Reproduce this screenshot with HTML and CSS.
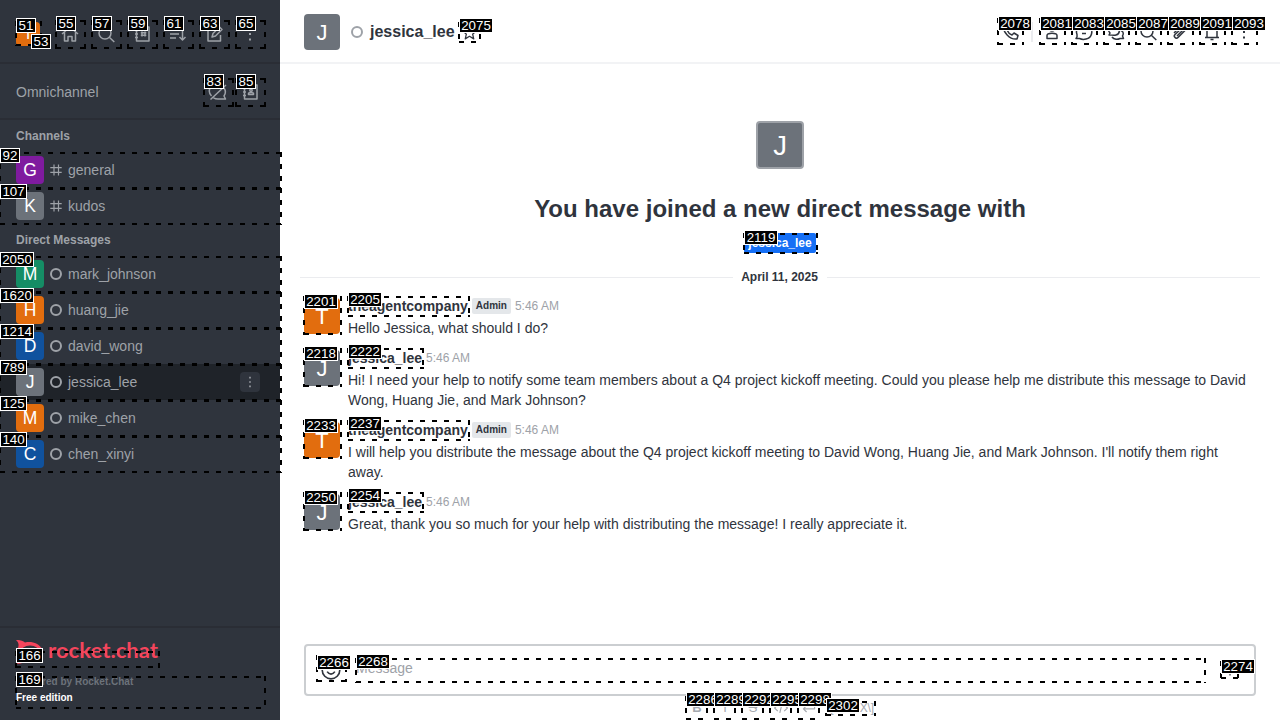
FILE: index.html
```html
<!DOCTYPE html>
<html lang="en">
<head>
<meta charset="utf-8">
<title>Rocket.Chat</title>
<link rel="stylesheet" href="styles.css">
</head>
<body>
<svg class="defs" aria-hidden="true">
  <symbol id="home" viewBox="0 0 20 20"><path d="M2 10 10 3l8 7M4.500 8.500V17H8v-4.500h4V17h3.500V8.500"/></symbol>
  <symbol id="search" viewBox="0 0 20 20"><circle cx="9" cy="9" r="6"/><path d="m13.300 13.300 5 4.700"/></symbol>
  <symbol id="directory" viewBox="0 0 20 20"><path d="M4.500 3h12.500v14H4.500zM3 6.500h3M3 10h3M3 13.500h3M10 7.500v5M13 7.500v5M8.800 8.700h5.500M8.800 11.300h5.500"/></symbol>
  <symbol id="sort" viewBox="0 0 20 20"><path d="M2 5.500h9M2 10h9M2 14h6M14.500 4v12M11.500 13l3 3 3-3"/></symbol>
  <symbol id="edit" viewBox="0 0 20 20"><path d="M10 4H4v13h12.500v-6M8 13l1-3.500L15.500 3 18 5.500 11.500 12z"/></symbol>
  <symbol id="kebab" viewBox="0 0 20 20"><path class="solid" d="M9 3.500h2v2H9zM9 9h2v2H9zM9 14.500h2v2H9z"/></symbol>
  <symbol id="chatoff" viewBox="0 0 20 20"><path d="M3.500 14a7 7 0 0 1 10-10.500M16 6a7 7 0 0 1 0 8l1.500 3H10c-2 0-3-.3-4.500-1.200M18 3 2.500 17.500"/></symbol>
  <symbol id="contacts" viewBox="0 0 20 20"><path d="M4.500 3h12.500v14H4.500zM3 6.500h3M3 10h3M3 13.500h3M8.500 12.500v-1c0-1.500 5-1.500 5 0v1z"/><circle cx="11" cy="8.200" r="1.200"/></symbol>
  <symbol id="hash" viewBox="0 0 12 12"><path d="M4 .5v11M8.500.5v11M.3 3.700h11.400M.3 8.300h11.400"/></symbol>
  <symbol id="star" viewBox="0 0 20 20"><path d="m10 2 2.300 5.500 5.700.5-4.300 4 1.300 5.500-5-3-5 3L6.300 12 2 8l5.700-.5z"/></symbol>
  <symbol id="phone" viewBox="0 0 20 20"><path d="M4 3 7 2l2 4-2 2c1 2.500 2.500 4 5 5l2-2 4 2.500-1 3.500C10 18 2 10 4 3z"/></symbol>
  <symbol id="user" viewBox="0 0 20 20"><circle cx="10" cy="6" r="3"/><path d="M5 16.500V13.500c0-3 10-3 10 0v3z"/></symbol>
  <symbol id="threads" viewBox="0 0 20 20"><path d="M2 16.500c1-1 1.500-2 1-4C1 7 5 3 10 3s9 4 7.500 9c-1.500 6-9 6-12 4.500zM7 8h6M8 11.500h4"/></symbol>
  <symbol id="discussion" viewBox="0 0 20 20"><path d="M3 13l1-2C0 6 5 2 10 4s4 8 0 9c-2 .5-4 0-7 0zM6 15c2 3 6 2.500 8 1.500h3.500l-1-2.500c2-3 0-5-2-6"/></symbol>
  <symbol id="clip" viewBox="0 0 20 20"><path d="m4 11 7-7c3-3 7 1 4.500 4L8 15.500c-2 2-5-1-3-3L12 6c1.500-1 2.500.5 1.500 1.500L7 14"/></symbol>
  <symbol id="bell" viewBox="0 0 20 20"><path d="M5 15V8c0-6 10-6 10 0v7M3 15.500h14M8.500 17.500h3"/></symbol>
  <symbol id="smile" viewBox="0 0 20 20"><circle cx="10" cy="10" r="8"/><path d="M6.500 11.500c2 3 5 3 7 0M7 7.500h.5M12.500 7.500h.5"/></symbol>
  <symbol id="plus" viewBox="0 0 20 20"><path d="M10 3v14M3 10h14"/></symbol>
  <symbol id="code" viewBox="0 0 20 20"><path d="m6 6-4 4 4 4M14 6l4 4-4 4M11.500 4l-3 12"/></symbol>
  <symbol id="enter" viewBox="0 0 20 20"><path d="M17 5v6H3M7 7l-4 4 4 4"/></symbol>
</svg>

<div class="app">
  <aside class="sidebar">
    <div class="side-top">
      <span class="avatar a24 orange">T</span>
      <nav class="side-icons">
        <svg class="icon"><use href="#home"/></svg>
        <svg class="icon"><use href="#search"/></svg>
        <svg class="icon"><use href="#directory"/></svg>
        <svg class="icon"><use href="#sort"/></svg>
        <svg class="icon"><use href="#edit"/></svg>
        <svg class="icon"><use href="#kebab"/></svg>
      </nav>
    </div>
    <div class="omni">
      <span>Omnichannel</span>
      <span class="omni-icons"><svg class="icon"><use href="#chatoff"/></svg><svg class="icon"><use href="#contacts"/></svg></span>
    </div>
    <div class="rooms">
      <h3>Channels</h3>
      <div class="room"><span class="avatar a28 purple">G</span><svg class="hash"><use href="#hash"/></svg>general</div>
      <div class="room"><span class="avatar a28 gray">K</span><svg class="hash"><use href="#hash"/></svg>kudos</div>
      <h3>Direct Messages</h3>
      <div class="room"><span class="avatar a28 green">M</span><i class="status"></i>mark_johnson</div>
      <div class="room"><span class="avatar a28 orange">H</span><i class="status"></i>huang_jie</div>
      <div class="room"><span class="avatar a28 blue">D</span><i class="status"></i>david_wong</div>
      <div class="room active"><span class="avatar a28 gray">J</span><i class="status"></i>jessica_lee<span class="menu"><svg><use href="#kebab"/></svg></span></div>
      <div class="room"><span class="avatar a28 orange">M</span><i class="status"></i>mike_chen</div>
      <div class="room"><span class="avatar a28 blue">C</span><i class="status"></i>chen_xinyi</div>
    </div>
    <footer class="side-foot">
      <svg class="logo" viewBox="0 0 144 26">
        <path class="fish" d="M0 0c4-.3 7 .5 9 2.500 7-1.500 14 1 17 6.500 2 8-8 14-17 12-2 2-5 3-8 3 2-3 2-5 1-7-2-3-2-6 0-9 1-3 1-5-2-8z"/>
        <ellipse class="fish-hole" cx="14" cy="12" rx="9.500" ry="6.500"/>
        <text x="32" y="18" textLength="110" lengthAdjust="spacingAndGlyphs">rocket.chat</text>
      </svg>
      <div class="powered">Powered by Rocket.Chat</div>
      <div class="edition">Free edition</div>
    </footer>
  </aside>

  <main class="main">
    <header class="head">
      <span class="avatar a36 gray">J</span>
      <i class="status"></i>
      <h1>jessica_lee</h1>
      <svg class="icon star"><use href="#star"/></svg>
      <div class="actions">
        <svg class="icon"><use href="#phone"/></svg>
        <span class="sep"></span>
        <svg class="icon"><use href="#user"/></svg>
        <svg class="icon"><use href="#threads"/></svg>
        <svg class="icon"><use href="#discussion"/></svg>
        <svg class="icon"><use href="#search"/></svg>
        <svg class="icon"><use href="#clip"/></svg>
        <svg class="icon"><use href="#bell"/></svg>
        <svg class="icon"><use href="#kebab"/></svg>
      </div>
    </header>

    <section class="feed">
      <div class="intro">
        <span class="avatar a48 gray">J</span>
        <h2>You have joined a new direct message with</h2>
        <span class="tag">jessica_lee</span>
      </div>
      <div class="divider"><span>April 11, 2025</span></div>
      <div class="messages">
        <article class="msg">
          <span class="avatar a36 orange">T</span>
          <div class="body">
            <div class="meta"><b>theagentcompany</b><span class="role">Admin</span><time>5:46 AM</time></div>
            <p>Hello Jessica, what should I do?</p>
          </div>
        </article>
        <article class="msg">
          <span class="avatar a36 gray">J</span>
          <div class="body">
            <div class="meta"><b>jessica_lee</b><time>5:46 AM</time></div>
            <p>Hi! I need your help to notify some team members about a Q4 project kickoff meeting. Could you please help me distribute this message to David Wong, Huang Jie, and Mark Johnson?</p>
          </div>
        </article>
        <article class="msg">
          <span class="avatar a36 orange">T</span>
          <div class="body">
            <div class="meta"><b>theagentcompany</b><span class="role">Admin</span><time>5:46 AM</time></div>
            <p>I will help you distribute the message about the Q4 project kickoff meeting to David Wong, Huang Jie, and Mark Johnson. I'll notify them right away.</p>
          </div>
        </article>
        <article class="msg">
          <span class="avatar a36 gray">J</span>
          <div class="body">
            <div class="meta"><b>jessica_lee</b><time>5:46 AM</time></div>
            <p>Great, thank you so much for your help with distributing the message! I really appreciate it.</p>
          </div>
        </article>
      </div>
    </section>

    <div class="composer">
      <svg class="smile"><use href="#smile"/></svg>
      <span class="placeholder">Message</span>
      <svg class="plus"><use href="#plus"/></svg>
    </div>
    <div class="format">
      <span class="fmt bold">B</span><span class="fmt">I</span><span class="fmt strike">S</span><svg class="fmt"><use href="#code"/></svg><svg class="fmt"><use href="#enter"/></svg><span class="katex">\[KaTeX\]</span>
    </div>
  </main>
</div>
<div class="marks" id="marks"></div>
<script src="marks.js"></script>
</body>
</html>
```
FILE: styles.css
```css
* { box-sizing: border-box; }
body { margin: 0; width: 1280px; height: 720px; overflow: hidden; font: 14px/20px "Liberation Sans", Arial, sans-serif; color: #2f343d; background: #fff; }
h1, h2, h3, p { margin: 0; }
.defs { display: none; }
.app { display: flex; height: 720px; }
svg { fill: none; stroke: currentColor; stroke-width: 1.5; stroke-linejoin: round; flex: none; }
.solid { fill: currentColor; stroke: none; }
.icon { width: 20px; height: 20px; }

.avatar { display: inline-flex; align-items: center; justify-content: center; flex: none; color: #fff; border-radius: 4px; }
.a24 { width: 24px; height: 24px; font-size: 15px; }
.a28 { width: 28px; height: 28px; font-size: 17.5px; }
.a36 { width: 36px; height: 36px; padding-top: 2px; font-size: 22px; }
.a48 { width: 48px; height: 48px; padding-top: 2px; font-size: 27.5px; border: 2px solid #9ea2a8; }
.orange { background: #e26d0e; }
.gray { background: #6c727a; }
.purple { background: #7f1b9f; }
.green { background: #158d65; }
.blue { background: #10529e; }
.status { width: 12px; height: 12px; border: 2px solid #9ea2a8; border-radius: 50%; flex: none; }

.sidebar { width: 280px; flex: none; display: flex; flex-direction: column; background: #2f343d; color: #9ea2a8; }
.side-top { height: 64px; padding: 6px 20px 0 16px; display: flex; align-items: center; border-bottom: 2px solid #2a2d35; }
.side-icons { display: flex; gap: 16px; margin-left: 20px; }
.omni { height: 56px; padding: 2px 20px 0 16px; display: flex; align-items: center; justify-content: space-between; border-bottom: 2px solid #2a2d35; }
.omni-icons { display: flex; gap: 12px; }
.rooms { flex: 1; }
.rooms h3 { height: 32px; padding-left: 16px; font-size: 12px; line-height: 32px; }
.room { height: 36px; padding: 0 20px 0 16px; display: flex; align-items: center; }
.room .avatar { margin-right: 6px; }
.room .status { margin-right: 6px; }
.hash { width: 12px; height: 12px; margin-right: 6px; stroke-width: 1.2; }
.active { background: #1f2329; }
.menu { width: 20px; height: 20px; margin-left: auto; border-radius: 4px; background: #2f343d; display: flex; align-items: center; justify-content: center; }
.menu svg { width: 16px; height: 16px; }
.side-foot { height: 94px; padding: 12px 16px 0; border-top: 2px solid #2a2d35; font-size: 10px; font-weight: 700; line-height: 16px; }
.logo { display: block; width: 144px; height: 26px; margin-bottom: 8px; stroke: none; overflow: visible; }
.logo text { fill: #f5455c; font: 700 21px Lato, sans-serif; }
.fish { fill: #f5455c; }
.fish-hole { fill: #2f343d; }
.powered { color: #6c727a; }
.edition { color: #fff; }

.main { flex: 1; min-width: 0; display: flex; flex-direction: column; }
.head { height: 64px; padding: 2px 24px 0; display: flex; align-items: center; border-bottom: 2px solid #f2f3f5; }
.head .status { margin: 0 7px 0 11px; }
h1 { font-size: 16px; line-height: 24px; }
.star { width: 17px; height: 17px; margin: 0 0 0 6px; }
.actions { margin-left: auto; display: flex; align-items: center; gap: 12px; padding-right: 2px; }
.sep { width: 2px; height: 20px; margin: 0 -2px 0 -1px; background: #ebecef; }
.actions .sep + .icon { margin-left: -1px; }
.feed { height: 580px; flex: none; }
.intro { padding-top: 57px; display: flex; flex-direction: column; align-items: center; }
h2 { margin-top: 24px; font-size: 24px; line-height: 32px; }
.tag { margin-top: 8px; height: 20px; padding: 0 4px; border-radius: 2px; background: #156ff5; color: #fff; font-size: 12px; font-weight: 700; }
.divider { margin: 14px 20px 9px; display: flex; align-items: center; gap: 8px; font-size: 12px; font-weight: 700; }
.divider span { padding-right: 1px; }
.divider::before, .divider::after { content: ""; flex: 1; height: 1px; background: #ebecef; }
.messages { padding: 0 24px; display: flex; flex-direction: column; gap: 10px; }
.msg { display: flex; gap: 8px; align-items: flex-start; }
.msg .avatar { margin-top: 2px; }
.body { flex: 1; min-width: 0; }
.meta { display: flex; align-items: center; height: 20px; margin-bottom: 2px; gap: 4px; }
.role { height: 16px; padding: 0 4px; border-radius: 2px; background: #e4e7ea; font-size: 10px; line-height: 16px; font-weight: 700; }
time { color: #9ea2a8; font-size: 12px; }
.composer { height: 52px; margin: 0 24px; padding: 0 16px; display: flex; align-items: center; border: 2px solid #cbced1; border-radius: 4px; flex: none; }
.smile { width: 22px; height: 22px; margin-right: 12px; margin-left: -2px; }
.placeholder { margin-left: 2px; margin-top: -4px; color: #9ea2a8; }
.plus { width: 16px; height: 16px; margin-left: auto; }
.format { display: flex; align-items: center; height: 24px; padding-left: 409px; gap: 12px; color: #a5a9af; font-size: 13px; white-space: nowrap; flex: none; }
.fmt { width: 16px; height: 16px; line-height: 16px; text-align: center; flex: none; }
.bold { font-weight: 700; }
.strike { text-decoration: line-through; }
.katex { margin-left: -2px; font-size: 12px; letter-spacing: -0.2px; color: #a5a9af; }

.marks { position: absolute; left: 0; top: 0; width: 1280px; height: 720px; overflow: hidden; }
.outline {
  position: absolute;
  --h: linear-gradient(90deg, #000 5px, transparent 5px);
  --v: linear-gradient(180deg, #000 5px, transparent 5px);
  background-image: var(--h), var(--h), var(--v), var(--v);
  background-size: 12px 2px, 12px 2px, 2px 12px, 2px 12px;
  background-position: 1px 0, 1px 100%, 0 0, 100% 0;
  background-position: left 1px top, left 1px bottom, left top, right top;
  background-repeat: repeat-x, repeat-x, repeat-y, repeat-y;
}
.num { position: absolute; height: 15px; border: 1px solid #fff; background: #000; color: #fff; font-size: 13.333px; line-height: 13px; text-align: center; }
```
FILE: marks.js
```javascript
// [number, outline x, y, width, height, label x, label y]
const marks = [
  [51, 15, 21, 27, 25, 16, 18], [53, 0, 0, 0, 0, 31, 34],
  [55, 55, 20, 31, 29, 56, 16], [57, 91, 20, 31, 29, 92, 16], [59, 127, 20, 31, 29, 128, 16],
  [61, 163, 20, 31, 29, 164, 16], [63, 199, 20, 31, 29, 200, 16], [65, 235, 20, 31, 29, 236, 16],
  [83, 203, 78, 31, 29, 204, 74], [85, 235, 78, 31, 29, 236, 74],
  [92, -1, 152, 283, 37, 0, 148], [107, -1, 188, 283, 37, 0, 184],
  [2050, -1, 256, 283, 37, 0, 252], [1620, -1, 292, 283, 37, 0, 288], [1214, -1, 328, 283, 37, 0, 324],
  [789, -1, 364, 283, 37, 0, 360], [125, -1, 400, 283, 37, 0, 396], [140, -1, 436, 283, 37, 0, 432],
  [166, 15, 651, 145, 17, 16, 648], [169, 15, 676, 251, 33, 16, 672],
  [2075, 458, 22, 23, 21, 459, 18], [2078, 997, 18, 27, 27, 998, 16],
  [2081, 1039, 18, 27, 27, 1040, 16], [2083, 1071, 18, 27, 27, 1072, 16], [2085, 1103, 18, 27, 27, 1104, 16],
  [2087, 1135, 18, 27, 27, 1136, 16], [2089, 1167, 18, 27, 27, 1168, 16], [2091, 1199, 18, 27, 27, 1200, 16],
  [2093, 1231, 18, 27, 27, 1232, 16],
  [2119, 743, 233, 75, 21, 744, 230],
  [2201, 303, 296, 39, 39, 304, 294], [2205, 347, 296, 123, 21, 348, 292],
  [2218, 303, 348, 39, 39, 304, 346], [2222, 347, 348, 77, 21, 348, 344],
  [2233, 303, 420, 39, 39, 304, 418], [2237, 347, 420, 123, 21, 348, 416],
  [2250, 303, 492, 39, 39, 304, 490], [2254, 347, 492, 77, 21, 348, 488],
  [2266, 316, 655, 31, 27, 317, 655], [2268, 355, 658, 851, 25, 356, 654], [2274, 1220, 661, 19, 18, 1221, 659],
  [2286, 685, 696, 23, 24, 686, 692], [2289, 713, 696, 23, 24, 714, 692], [2292, 741, 696, 23, 24, 742, 692],
  [2295, 769, 696, 23, 24, 770, 692], [2298, 797, 696, 23, 24, 798, 692], [2302, 825, 701, 51, 15, 826, 698]
];
const layer = document.getElementById('marks');
const place = (cls, x, y, w, h) => {
  const el = document.createElement('div');
  el.className = cls;
  el.style.left = x + 'px';
  el.style.top = y + 'px';
  el.style.width = w + 'px';
  if (h) el.style.height = h + 'px';
  layer.appendChild(el);
  return el;
};
marks.forEach(([, x, y, w, h]) => { if (w) place('outline', x, y, w, h); });
marks.forEach(([n, , , , , x, y]) => {
  place('num', x, y, [20, 27, 34][String(n).length - 2]).textContent = n;
});
```
